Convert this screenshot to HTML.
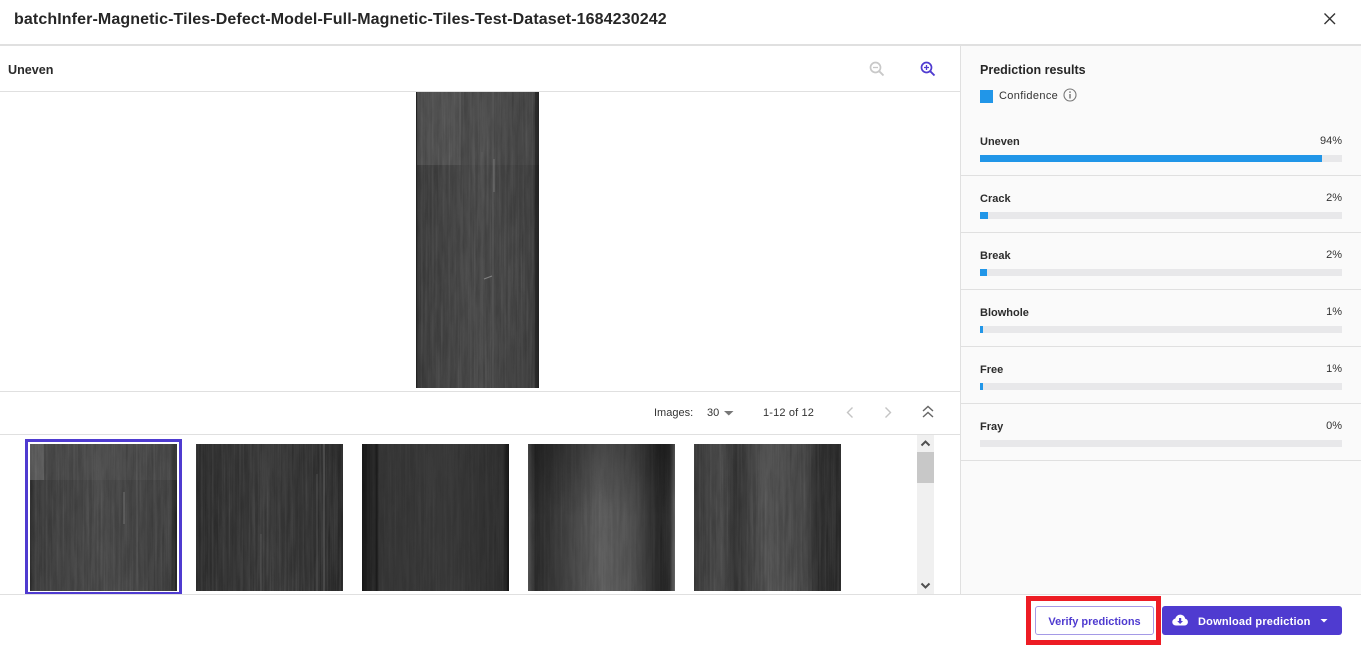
<!DOCTYPE html>
<html><head><meta charset="utf-8">
<style>
html,body{margin:0;padding:0;background:#fff}
body{position:relative;width:1361px;height:645px;overflow:hidden;font-family:"Liberation Sans",sans-serif;color:#262626}
.a{position:absolute;white-space:nowrap}
.l{position:absolute;background:#e0e0e0}
.lab{position:absolute;left:980px;font-size:11px;font-weight:bold;line-height:14px;color:#2c2c2c}
.pct{position:absolute;right:19px;font-size:11px;line-height:14px;color:#333}
.tr{position:absolute;left:980px;width:362px;height:7px;background:#e8e8ea}
.fi{position:absolute;left:0;top:0;height:7px;background:#2196e8}
svg{position:absolute;display:block}
</style></head><body>
<svg width="0" height="0" style="left:0;top:0"><defs>
<filter id="s1" x="0" y="0" width="100%" height="100%"><feTurbulence type="fractalNoise" baseFrequency="0.55 0.008" numOctaves="2" seed="4"/><feColorMatrix values="0 0 0 0 1 0 0 0 0 1 0 0 0 0 1 1.6 0 0 0 -0.62"/></filter>
<filter id="s2" x="0" y="0" width="100%" height="100%"><feTurbulence type="fractalNoise" baseFrequency="0.25 0.03" numOctaves="3" seed="9"/><feColorMatrix values="0 0 0 0 0 0 0 0 0 0 0 0 0 0 0 1.4 0 0 0 -0.55"/></filter>
<linearGradient id="g1"><stop offset="0" stop-color="#2b2b2b"/><stop offset=".03" stop-color="#3e3e3e"/><stop offset=".5" stop-color="#494949"/><stop offset=".95" stop-color="#404040"/><stop offset="1" stop-color="#222"/></linearGradient>
<linearGradient id="g2"><stop offset="0" stop-color="#2e2e2e"/><stop offset=".5" stop-color="#3a3a3a"/><stop offset=".8" stop-color="#333"/><stop offset="1" stop-color="#2a2a2a"/></linearGradient>
<linearGradient id="g3"><stop offset="0" stop-color="#161616"/><stop offset=".08" stop-color="#2a2a2a"/><stop offset=".1" stop-color="#1b1b1b"/><stop offset=".12" stop-color="#353535"/><stop offset=".6" stop-color="#383838"/><stop offset=".96" stop-color="#2e2e2e"/><stop offset="1" stop-color="#111"/></linearGradient>
<linearGradient id="g4"><stop offset="0" stop-color="#555"/><stop offset=".05" stop-color="#2a2a2a"/><stop offset=".2" stop-color="#3a3a3a"/><stop offset=".5" stop-color="#5e5e5e"/><stop offset=".7" stop-color="#525252"/><stop offset=".9" stop-color="#262626"/><stop offset=".96" stop-color="#2a2a2a"/><stop offset="1" stop-color="#666"/></linearGradient>
<linearGradient id="g5"><stop offset="0" stop-color="#3a3a3a"/><stop offset=".18" stop-color="#4a4a4a"/><stop offset=".28" stop-color="#343434"/><stop offset=".5" stop-color="#525252"/><stop offset=".75" stop-color="#484848"/><stop offset=".85" stop-color="#2e2e2e"/><stop offset="1" stop-color="#2a2a2a"/></linearGradient>
</defs></svg>

<div class="a" style="left:14px;top:10px;font-size:16px;letter-spacing:.11px;font-weight:bold;line-height:20px;color:#262626">batchInfer-Magnetic-Tiles-Defect-Model-Full-Magnetic-Tiles-Test-Dataset-1684230242</div>
<svg style="left:1323px;top:12px" width="14" height="14" viewBox="0 0 14 14"><path d="M1.5 1.5L12 12M12 1.5L1.5 12" stroke="#333" stroke-width="1.4" fill="none"/></svg>
<div class="l" style="left:0;top:44px;width:1361px;height:2px"></div>

<div class="a" style="left:8px;top:63px;font-size:12.6px;font-weight:bold;line-height:15px;color:#2a2a2a">Uneven</div>
<svg style="left:868px;top:60px" width="18" height="18" viewBox="0 0 18 18"><circle cx="7.5" cy="7.5" r="5" fill="none" stroke="#c8c8c8" stroke-width="1.7"/><path d="M11.3 11.3L15.5 15.5" stroke="#c8c8c8" stroke-width="1.9"/><path d="M5 7.5H10" stroke="#c8c8c8" stroke-width="1.3"/></svg>
<svg style="left:919px;top:60px" width="18" height="18" viewBox="0 0 18 18"><circle cx="7.5" cy="7.5" r="5" fill="none" stroke="#4f3bd0" stroke-width="1.7"/><path d="M11.3 11.3L15.5 15.5" stroke="#4f3bd0" stroke-width="1.9"/><path d="M5 7.5H10M7.5 5V10" stroke="#4f3bd0" stroke-width="1.3"/></svg>
<div class="l" style="left:0;top:91px;width:960px;height:1px"></div>

<svg style="left:416px;top:92px" width="123" height="296" viewBox="0 0 123 296">
<rect width="123" height="296" fill="url(#g1)"/>
<rect width="45" height="73" fill="#6a6a6a" opacity=".4"/><rect x="45" width="78" height="73" fill="#606060" opacity=".2"/>
<rect width="123" height="296" filter="url(#s1)" opacity=".1"/><rect width="123" height="296" filter="url(#s2)" opacity=".18"/>
<rect x="0" width="1" height="296" fill="#222"/><rect x="119" width="4" height="296" fill="#222" opacity=".6"/>
<path d="M77 0V296M66 60V296" stroke="#888" stroke-width="1" opacity=".22"/>
<path d="M78 67V100" stroke="#aaa" stroke-width="2" opacity=".22"/><path d="M68 187L76 184" stroke="#aaa" opacity=".6"/>
</svg>

<div class="l" style="left:0;top:391px;width:960px;height:1px"></div>
<div class="a" style="left:654px;top:406px;font-size:11px;line-height:14px;color:#333">Images:</div>
<div class="a" style="left:707px;top:406px;font-size:11px;line-height:14px;color:#333">30</div>
<svg style="left:724px;top:411px" width="10" height="5" viewBox="0 0 10 5"><path d="M0 0H9.5L4.8 4.5Z" fill="#777"/></svg>
<div class="a" style="left:763px;top:406px;font-size:11px;letter-spacing:.15px;line-height:14px;color:#333">1-12 of 12</div>
<svg style="left:845px;top:406px" width="10" height="13" viewBox="0 0 10 13"><path d="M7.5 1.5L2.5 6.5L7.5 11.5" fill="none" stroke="#c4c4c4" stroke-width="1.4"/></svg>
<svg style="left:883px;top:406px" width="10" height="13" viewBox="0 0 10 13"><path d="M2.5 1.5L7.5 6.5L2.5 11.5" fill="none" stroke="#c4c4c4" stroke-width="1.4"/></svg>
<svg style="left:922px;top:405px" width="12" height="13" viewBox="0 0 12 13"><path d="M1 6L6 1.5L11 6M1 12L6 7.5L11 12" fill="none" stroke="#666" stroke-width="1.4"/></svg>
<div class="l" style="left:0;top:434px;width:960px;height:1px"></div>

<div class="a" style="left:25px;top:439px;width:151px;height:150px;border:3px solid #4f3bd0"></div>
<svg style="left:30px;top:444px" width="147" height="147" viewBox="0 0 147 147">
<rect width="147" height="147" fill="url(#g1)"/><rect width="14" height="36" fill="#777" opacity=".55"/><rect x="14" width="133" height="36" fill="#5c5c5c" opacity=".25"/>
<rect width="147" height="147" filter="url(#s1)" opacity=".1"/><rect width="147" height="147" filter="url(#s2)" opacity=".18"/>
<path d="M94 48V80" stroke="#aaa" stroke-width="2" opacity=".22"/><path d="M107 0V147" stroke="#888" opacity=".25"/>
</svg>
<svg style="left:196px;top:444px" width="147" height="147" viewBox="0 0 147 147">
<rect width="147" height="147" fill="url(#g2)"/><rect width="147" height="147" filter="url(#s1)" opacity=".12"/><rect width="147" height="147" filter="url(#s2)" opacity=".2"/>
<path d="M128 0V147" stroke="#999" opacity=".5"/><path d="M121 30V147" stroke="#888" opacity=".35"/><path d="M65 90V147" stroke="#888" opacity=".35"/>
</svg>
<svg style="left:362px;top:444px" width="147" height="147" viewBox="0 0 147 147">
<rect width="147" height="147" fill="url(#g3)"/><rect width="147" height="147" filter="url(#s1)" opacity=".05"/><rect width="147" height="147" filter="url(#s2)" opacity=".1"/>
</svg>
<svg style="left:528px;top:444px" width="147" height="147" viewBox="0 0 147 147">
<rect width="147" height="147" fill="url(#g4)"/><rect width="147" height="147" filter="url(#s1)" opacity=".06"/><rect width="147" height="147" filter="url(#s2)" opacity=".12"/>
<defs><linearGradient id="v4" x1="0" y1="0" x2="0" y2="1"><stop offset="0" stop-color="#000" stop-opacity=".25"/><stop offset=".5" stop-color="#000" stop-opacity="0"/></linearGradient></defs><rect width="147" height="147" fill="url(#v4)"/>
</svg>
<svg style="left:694px;top:444px" width="147" height="147" viewBox="0 0 147 147">
<rect width="147" height="147" fill="url(#g5)"/><rect width="147" height="147" filter="url(#s1)" opacity=".1"/><rect width="147" height="147" filter="url(#s2)" opacity=".18"/>
</svg>

<div class="a" style="left:917px;top:435px;width:17px;height:159px;background:#f0f0f0"></div>
<div class="a" style="left:917px;top:452px;width:17px;height:31px;background:#c8c8c8"></div>
<svg style="left:917px;top:435px" width="17" height="17" viewBox="0 0 17 17"><path d="M4.5 10.5L8.5 6.5L12.5 10.5" fill="none" stroke="#505050" stroke-width="2"/></svg>
<svg style="left:917px;top:577px" width="17" height="17" viewBox="0 0 17 17"><path d="M4.5 6.5L8.5 10.5L12.5 6.5" fill="none" stroke="#505050" stroke-width="2"/></svg>

<div class="a" style="left:961px;top:46px;width:400px;height:548px;background:#fafafa"></div>
<div class="l" style="left:960px;top:46px;width:1px;height:548px"></div>
<div class="a" style="left:980px;top:62px;font-size:12.5px;font-weight:bold;line-height:16px;color:#262626">Prediction results</div>
<div class="a" style="left:980px;top:90px;width:13px;height:13px;background:#2196e8"></div>
<div class="a" style="left:999px;top:89px;font-size:11px;line-height:14px;color:#333;letter-spacing:.35px">Confidence</div>
<svg style="left:1063px;top:88px" width="14" height="14" viewBox="0 0 14 14"><circle cx="7" cy="7" r="6" fill="none" stroke="#777" stroke-width="1.1"/><path d="M7 6V10.5" stroke="#666" stroke-width="1.3"/><rect x="6.3" y="3.4" width="1.4" height="1.4" fill="#666"/></svg>

<div class="lab" style="top:135px">Uneven</div><div class="pct" style="top:134px">94%</div>
<div class="tr" style="top:155px"><div class="fi" style="width:342px"></div></div>
<div class="l" style="left:961px;top:175px;width:400px;height:1px"></div>
<div class="lab" style="top:192px">Crack</div><div class="pct" style="top:191px">2%</div>
<div class="tr" style="top:212px"><div class="fi" style="width:8px"></div></div>
<div class="l" style="left:961px;top:232px;width:400px;height:1px"></div>
<div class="lab" style="top:249px">Break</div><div class="pct" style="top:248px">2%</div>
<div class="tr" style="top:269px"><div class="fi" style="width:7px"></div></div>
<div class="l" style="left:961px;top:289px;width:400px;height:1px"></div>
<div class="lab" style="top:306px">Blowhole</div><div class="pct" style="top:305px">1%</div>
<div class="tr" style="top:326px"><div class="fi" style="width:3px"></div></div>
<div class="l" style="left:961px;top:346px;width:400px;height:1px"></div>
<div class="lab" style="top:363px">Free</div><div class="pct" style="top:362px">1%</div>
<div class="tr" style="top:383px"><div class="fi" style="width:3px"></div></div>
<div class="l" style="left:961px;top:403px;width:400px;height:1px"></div>
<div class="lab" style="top:420px">Fray</div><div class="pct" style="top:419px">0%</div>
<div class="tr" style="top:440px"></div>
<div class="l" style="left:961px;top:460px;width:400px;height:1px"></div>

<div class="l" style="left:0;top:594px;width:1361px;height:1px"></div>
<div class="a" style="left:1026px;top:596px;width:125px;height:39px;border:5px solid #ed1c24"></div>
<div class="a" style="left:1035px;top:606px;width:117px;height:27px;border:1px solid #a59ae6;border-radius:3px;background:#fff;text-align:center;font-size:11px;font-weight:bold;line-height:30px;color:#4f3bd0">Verify predictions</div>
<div class="a" style="left:1162px;top:606px;width:180px;height:29px;border-radius:3px;background:#4f3bd0"></div>
<svg style="left:1172px;top:613px" width="16" height="14" viewBox="0 0 16 14"><path d="M4 12.5C1.8 12.5 .3 11 .3 9C.3 7.2 1.6 5.8 3.3 5.6C4 3.2 6 1.6 8.3 1.6C10.8 1.6 12.8 3.4 13.2 5.7C14.8 5.9 15.9 7.2 15.9 9C15.9 11 14.4 12.5 12.6 12.5Z" fill="#fff"/><path d="M7 5H9.2V8H11L8.1 11L5.2 8H7Z" fill="#4f3bd0"/></svg>
<div class="a" style="left:1198px;top:614.5px;font-size:11px;font-weight:bold;line-height:15px;color:#fff;letter-spacing:.2px">Download prediction</div>
<svg style="left:1320px;top:619px" width="8" height="4" viewBox="0 0 8 4"><path d="M.5 0H7.5L4 3.5Z" fill="#fff"/></svg>
</body></html>
